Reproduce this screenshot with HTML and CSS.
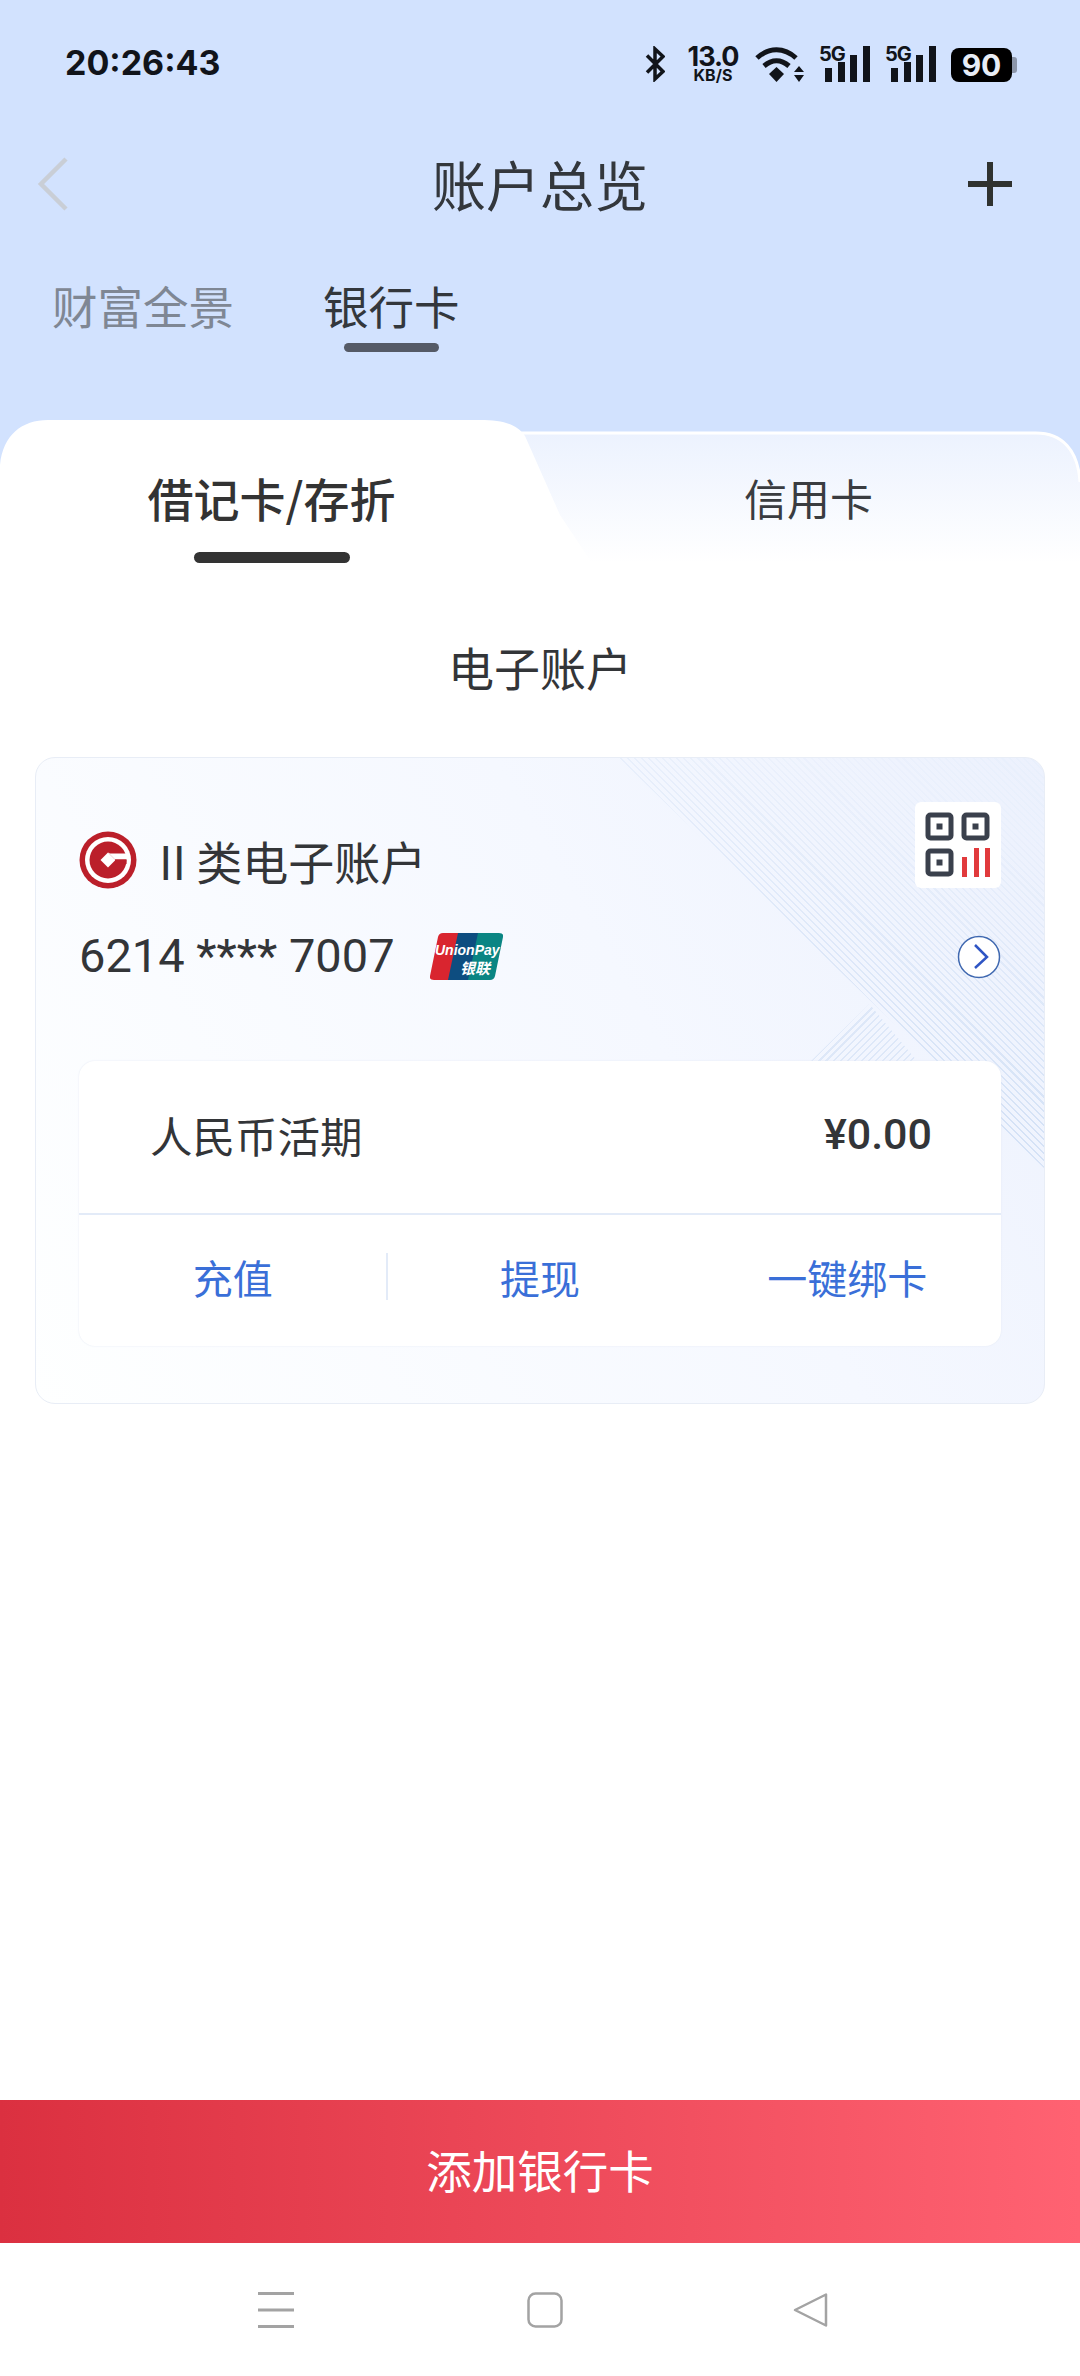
FILE: index.html
```html
<!DOCTYPE html>
<html lang="zh-CN">
<head>
    <meta charset="UTF-8">
    <meta name="viewport" content="width=device-width, initial-scale=1.0">
    <title>账户总览</title>
    <link rel="stylesheet" href="styles.css">
</head>
<body>
<div class="page">

    <!-- Cabecera azul -->
    <header class="top">
        <div class="status-bar">
            <span class="clock">20:26:43</span>
            <div class="status-icons">
                <svg class="bt" width="20" height="36" viewBox="0 0 20 36"><path d="M2 9.500 18 25.500 10 33V3l8 7.500L2 26.500" fill="none" stroke="#11141a" stroke-width="3.500"/></svg>
                <div class="speed"><span class="speed-num">13.0</span><span class="speed-unit">KB/S</span></div>
                <svg class="wifi" width="49" height="36" viewBox="0 0 49 36">
                    <path d="M2 12C14 1 29 1 41 12" fill="none" stroke="#11141a" stroke-width="5"/>
                    <path d="M9 20C17 13 26 13 34 20" fill="none" stroke="#11141a" stroke-width="5"/>
                    <path d="M21.500 21 29 28 21.500 36 14 28Z" fill="#11141a"/>
                    <path d="M44 20 49 26H39ZM44 36 39 29H49Z" fill="#11141a"/>
                </svg>
                <div class="signal"><span class="signal-label">5G</span>
                    <svg width="45" height="36" viewBox="0 0 45 36"><path d="M0 22h7v14H0zM13 16h7v20h-7zM25 9h7v27h-7zM38 0h7v36h-7z" fill="#11141a"/></svg>
                </div>
                <div class="signal"><span class="signal-label">5G</span>
                    <svg width="45" height="36" viewBox="0 0 45 36"><path d="M0 22h7v14H0zM13 16h7v20h-7zM25 9h7v27h-7zM38 0h7v36h-7z" fill="#11141a"/></svg>
                </div>
                <div class="battery"><span class="battery-level">90</span><span class="battery-nub"></span></div>
            </div>
        </div>

        <div class="nav-bar">
            <svg class="nav-back" width="32" height="56" viewBox="0 0 32 56"><path d="M29 3 4 28l25 25" fill="none" stroke="#c9ced6" stroke-width="4.500"/></svg>
            <h1 class="nav-title">账户总览</h1>
            <svg class="nav-add" width="44" height="44" viewBox="0 0 44 44"><path d="M22 0v44M0 22h44" stroke="#2f3230" stroke-width="6"/></svg>
        </div>

        <div class="top-tabs">
            <span class="top-tab">财富全景</span>
            <span class="top-tab top-tab-on">银行卡</span>
        </div>
    </header>

    <!-- Pestañas de tarjetas -->
    <div class="card-tabs">
        <svg class="card-tabs-bg" width="1080" height="143" viewBox="0 0 1080 143">
            <defs>
                <linearGradient id="tabFade" x1="0" y1="0" x2="0" y2="1">
                    <stop offset="0" stop-color="#ecf2fe"/>
                    <stop offset="1" stop-color="#ffffff"/>
                </linearGradient>
            </defs>
            <path d="M500 13H1036C1062 13 1078 30 1080 62V143H500Z" fill="url(#tabFade)"/>
            <path d="M500 13H1036C1062 13 1078 30 1080 62" fill="none" stroke="#fff" stroke-width="3"/>
            <path d="M0 45C3 15 22 0 48 0H480C503 0 517 4 525 16L560 95 592 143H0Z" fill="#fff"/>
        </svg>
        <div class="card-tab card-tab-on">借记卡/存折<span class="card-tab-line"></span></div>
        <div class="card-tab">信用卡</div>
    </div>

    <main class="content">
        <h2 class="section-title">电子账户</h2>

        <section class="account-card">
            <div class="hatch hatch-main"></div>
            <div class="hatch hatch-small"></div>

            <div class="account-head">
                <div class="account-info">
                    <div class="account-name">
                        <svg class="bank-logo" width="58" height="58" viewBox="0 0 58 58">
                            <circle cx="29" cy="29" r="28.500" fill="#bb1f2a"/>
                            <circle cx="29" cy="29" r="23" fill="#fff"/>
                            <circle cx="29" cy="29" r="18.500" fill="#bb1f2a"/>
                            <path d="M29 21.500 36.500 29 29 36.500 21.500 29Z" fill="#fff"/>
                            <path d="M29 21.500 36 28.500H50V22.500H31Z" fill="#fff"/>
                            <path d="M36 28.500H47.500V33H36Z" fill="#bb1f2a"/>
                        </svg>
                        <span>II 类电子账户</span>
                    </div>
                    <div class="account-number">
                        <span>6214 **** 7007</span>
                        <svg class="unionpay" width="73" height="47" viewBox="0 0 73 47">
                            <path d="M13 0H32L23 47H4Q-1 47 0 43L8 4Q9 0 13 0Z" fill="#d9252f"/>
                            <path d="M28 0H52L43 47H18Z" fill="#0d4d80"/>
                            <path d="M48 0H69Q74 0 73 4L65 43Q64 47 60 47H38Z" fill="#0a8583"/>
                            <text class="up-en" x="5" y="22">UnionPay</text>
                            <text class="up-cn" x="30" y="41">银联</text>
                        </svg>
                    </div>
                </div>
                <div class="account-side">
                    <div class="qr-box">
                        <svg width="66" height="66" viewBox="0 0 66 66">
                            <g fill="none" stroke="#3a404c" stroke-width="5">
                                <rect x="3" y="3" width="23" height="23" rx="2.500"/>
                                <rect x="39" y="3" width="23" height="23" rx="2.500"/>
                                <rect x="3" y="39" width="23" height="23" rx="2.500"/>
                            </g>
                            <path d="M11.500 11.500h6v6h-6zM47.500 11.500h6v6h-6zM11.500 47.500h6v6h-6z" fill="#3a404c"/>
                            <path d="M37 45h5v20h-5zM49 36h5v29h-5zM60 36h5v29h-5z" fill="#e13a3c"/>
                        </svg>
                    </div>
                    <svg class="go" width="44" height="44" viewBox="0 0 44 44">
                        <circle cx="22" cy="22" r="20.500" fill="#fff" stroke="#3f68b0" stroke-width="1.500"/>
                        <path d="M18 10 30 22 18 33" fill="none" stroke="#2f55c4" stroke-width="2.500"/>
                    </svg>
                </div>
            </div>

            <div class="balance-box">
                <div class="balance-row">
                    <span>人民币活期</span>
                    <span class="balance-amount">¥0.00</span>
                </div>
                <div class="balance-actions">
                    <a class="action action-split">充值</a>
                    <a class="action">提现</a>
                    <a class="action">一键绑卡</a>
                </div>
            </div>
        </section>
    </main>

    <div class="add-card">添加银行卡</div>

    <!-- Barra de navegación del sistema -->
    <footer class="sys-nav">
        <svg width="36" height="36" viewBox="0 0 36 36"><path d="M0 1.500h36M0 18h36M0 34.500h36" stroke="#a3a3a3" stroke-width="3"/></svg>
        <svg width="36" height="36" viewBox="0 0 36 36"><rect x="1.500" y="1.500" width="33" height="33" rx="7" fill="none" stroke="#a3a3a3" stroke-width="2.500"/></svg>
        <svg class="sys-back" width="36" height="36" viewBox="0 0 36 36"><path d="M33 2.500V33.500L2 18Z" fill="none" stroke="#a3a3a3" stroke-width="2.500" stroke-linejoin="round"/></svg>
    </footer>
</div>
</body>
</html>
```

FILE: styles.css
```css
* {
    box-sizing: border-box;
}

body {
    margin: 0;
    font-family: "Noto Sans CJK SC", "Noto Sans", sans-serif;
    color: #333538;
}

.page {
    width: 1080px;
    height: 2376px;
    display: flex;
    flex-direction: column;
    background: #fff;
    overflow: hidden;
}

.top {
    height: 420px;
    background: #d2e2fe;
}

.status-bar {
    height: 124px;
    padding: 45px 63px 0 65px;
    display: flex;
    justify-content: space-between;
    align-items: flex-start;
}

.clock {
    font-family: Inter, sans-serif;
    font-weight: 700;
    font-size: 34px;
    line-height: 36px;
    color: #11141a;
}

.status-icons {
    display: flex;
    align-items: flex-start;
    height: 36px;
    margin-top: 1px;
}

.bt {
    margin-right: 22px;
}

.speed {
    width: 52px;
    margin-right: 16px;
    display: flex;
    flex-direction: column;
    align-items: center;
    font-family: Inter, sans-serif;
    font-weight: 700;
    color: #11141a;
}

.speed-num {
    font-size: 27px;
    line-height: 22px;
    letter-spacing: -1px;
}

.speed-unit {
    font-size: 16px;
    line-height: 14px;
}

.wifi {
    margin-right: 15px;
}

.signal {
    width: 51px;
    height: 36px;
    margin-right: 15px;
    display: flex;
    justify-content: flex-end;
    position: relative;
}

.signal-label {
    position: absolute;
    left: 0;
    top: -3px;
    font-family: Inter, sans-serif;
    font-weight: 700;
    font-size: 20px;
    line-height: 22px;
    letter-spacing: -1px;
    color: #11141a;
}

.battery {
    width: 66px;
    height: 34px;
    margin-top: 2px;
    display: flex;
    align-items: center;
}

.battery-level {
    width: 61px;
    height: 34px;
    background: #000;
    border-radius: 8px;
    color: #e8edf6;
    font-family: Inter, sans-serif;
    font-weight: 700;
    font-size: 30px;
    line-height: 34px;
    text-align: center;
}

.battery-nub {
    width: 5px;
    height: 16px;
    background: #8c96aa;
    border-radius: 0 3px 3px 0;
}

.nav-bar {
    height: 120px;
    padding: 0 37px;
    display: grid;
    grid-template-columns: 1fr auto 1fr;
    align-items: center;
}

.nav-add {
    justify-self: end;
    margin-right: 31px;
}

.nav-title {
    margin: 0;
    font-weight: 400;
    font-size: 54px;
    line-height: 70px;
    color: #33373c;
}

.top-tabs {
    display: flex;
    gap: 89px;
    padding: 31px 0 0 52px;
}

.top-tab {
    font-size: 45.500px;
    line-height: 60px;
    color: #7f8794;
    position: relative;
}

.top-tab-on {
    color: #33373c;
}

.top-tab-on::after {
    content: "";
    position: absolute;
    left: 21px;
    right: 21px;
    top: 68px;
    height: 9px;
    border-radius: 5px;
    background: #555a66;
}

.card-tabs {
    height: 143px;
    background: #d2e2fe;
    position: relative;
    display: grid;
    grid-template-columns: 543px 1fr;
    padding: 47px 6px 0 0;
}

.card-tabs-bg {
    position: absolute;
    left: 0;
    top: 0;
}

.card-tab {
    position: relative;
    text-align: center;
    font-size: 43px;
    line-height: 60px;
    color: #3a3c40;
}

.card-tab-on {
    font-size: 46px;
    font-weight: 500;
    color: #333;
}

.card-tab-line {
    position: absolute;
    left: 194px;
    top: 85px;
    width: 156px;
    height: 11px;
    border-radius: 6px;
    background: #333;
}

.content {
    flex: 1;
    padding: 0 35px;
}

.section-title {
    margin: 0;
    padding-top: 73px;
    height: 194px;
    text-align: center;
    font-weight: 400;
    font-size: 46px;
    line-height: 60px;
    color: #333538;
}

.account-card {
    position: relative;
    height: 647px;
    padding: 44px 43px 0;
    overflow: hidden;
    border: 1px solid #e8edf6;
    border-radius: 20px;
    background: linear-gradient(60deg, #feffff 0%, #f5f8ff 60%, #ecf1fd 100%);
}

.hatch {
    position: absolute;
    background: repeating-linear-gradient(45deg, #d5e2f6 0, #d5e2f6 1.500px, transparent 1.500px, transparent 5px);
}

.hatch-main {
    right: 0;
    top: 0;
    width: 425px;
    height: 410px;
    clip-path: polygon(0 0, 100% 0, 100% 100%);
    -webkit-mask-image: linear-gradient(200deg, rgba(0, 0, 0, 0.15) 15%, #000 65%);
    mask-image: linear-gradient(200deg, rgba(0, 0, 0, 0.15) 15%, #000 65%);
}

.hatch-small {
    left: 774px;
    top: 246px;
    width: 108px;
    height: 58px;
    opacity: 0.7;
    background: repeating-linear-gradient(-45deg, #d5e2f6 0, #d5e2f6 1.500px, transparent 1.500px, transparent 5px);
    clip-path: polygon(0 100%, 55% 0, 100% 100%);
}

.account-head {
    position: relative;
    height: 259px;
    display: flex;
    justify-content: space-between;
}

.account-info {
    padding-top: 28px;
}

.account-name {
    display: flex;
    align-items: center;
    gap: 22px;
    font-size: 46px;
    line-height: 60px;
    color: #333538;
}

.account-number {
    margin-top: 36px;
    display: flex;
    align-items: center;
    gap: 35px;
    font-family: Roboto, sans-serif;
    font-size: 47px;
    line-height: 60px;
    color: #333538;
}

.up-en {
    font-family: "Liberation Sans", sans-serif;
    font-style: italic;
    font-weight: 700;
    font-size: 14px;
    fill: #fff;
}

.up-cn {
    font-family: "Noto Sans CJK SC", sans-serif;
    font-style: italic;
    font-weight: 700;
    font-size: 15px;
    fill: #fff;
}

.account-side {
    width: 86px;
    display: flex;
    flex-direction: column;
    align-items: flex-end;
}

.qr-box {
    width: 86px;
    height: 86px;
    padding: 10px;
    background: #fff;
    border-radius: 6px;
}

.go {
    margin-top: 47px;
}

.balance-box {
    position: relative;
    width: 922px;
    height: 285px;
    background: #fff;
    border-radius: 16px;
    box-shadow: 0 0 2px #e3e8f2;
}

.balance-row {
    height: 154px;
    padding: 0 69px 6px 71px;
    display: flex;
    justify-content: space-between;
    align-items: center;
    border-bottom: 2px solid #e3ebf8;
    font-size: 42.500px;
    color: #333538;
}

.balance-amount {
    font-family: Roboto, sans-serif;
    font-weight: 500;
    font-size: 43px;
}

.balance-actions {
    display: grid;
    grid-template-columns: repeat(3, 1fr);
    height: 131px;
    padding-bottom: 8px;
    align-items: center;
}

.action {
    position: relative;
    text-align: center;
    font-size: 40px;
    line-height: 56px;
    color: #3a6fd8;
}

.action-split::after {
    content: "";
    position: absolute;
    right: -2px;
    top: 4px;
    width: 2px;
    height: 47px;
    background: #e3ebf8;
}

.add-card {
    height: 143px;
    padding-bottom: 5px;
    display: flex;
    justify-content: center;
    align-items: center;
    background: linear-gradient(90deg, #db3040, #ff6272);
    color: #fff;
    font-size: 45.500px;
}

.sys-nav {
    height: 133px;
    padding: 49px 0 0 258px;
    display: flex;
    align-items: flex-start;
    gap: 233px;
}

.sys-back {
    margin-left: -3px;
}
```
